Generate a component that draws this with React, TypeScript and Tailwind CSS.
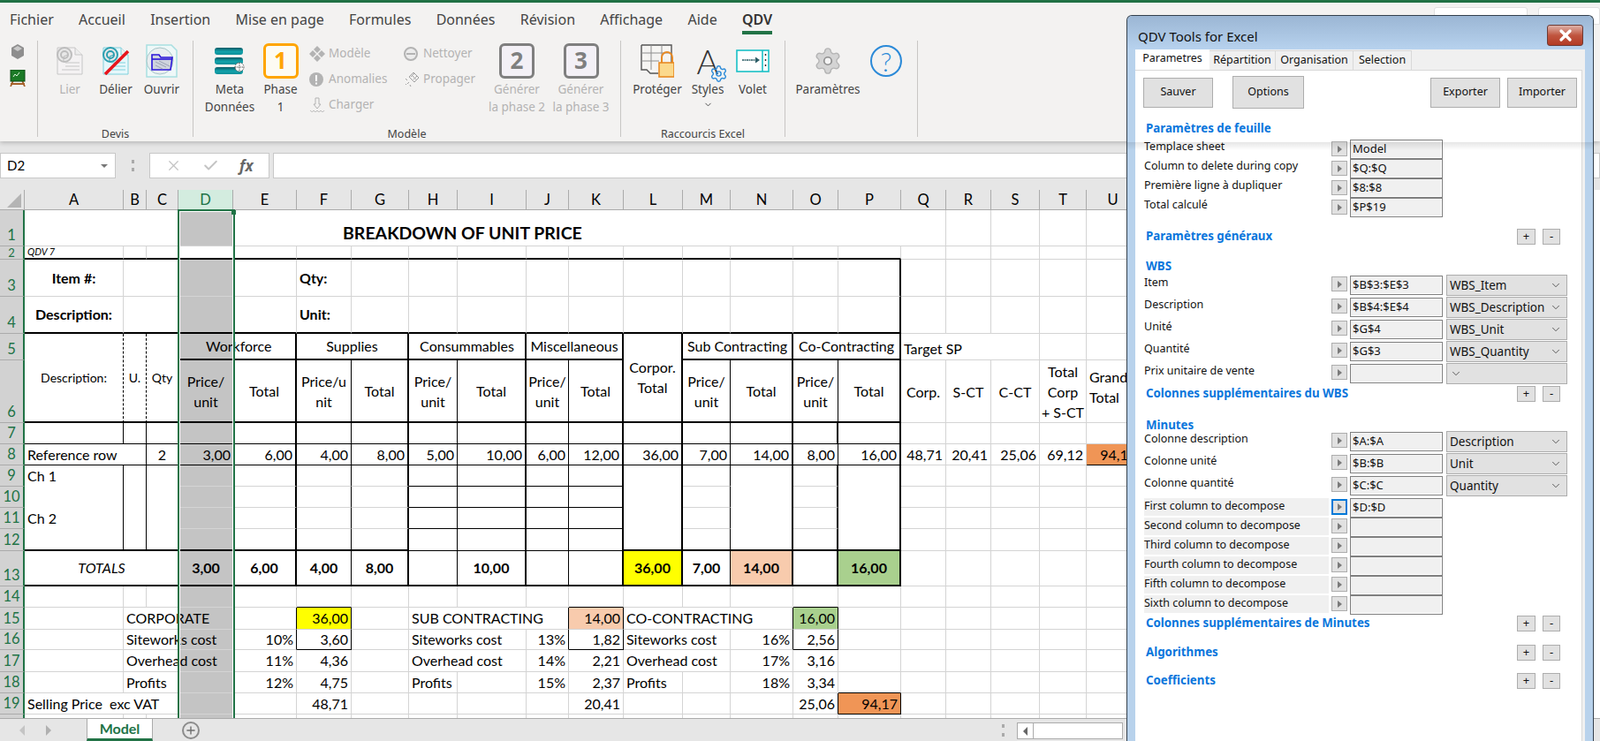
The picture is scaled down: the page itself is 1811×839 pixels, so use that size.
import { Check, ChevronDown, Plus, Settings, X } from "lucide-react";
import type { ReactNode } from "react";

// ---------- sheet data ----------

type Edge = "grid" | "none" | "thin" | "thick" | "dash";
type Cell = { t?: string; r?: Edge; b?: Edge; cls?: string; bg?: string; skip?: boolean };

const rightEdge: Record<Edge, string> = {
  grid: "border-r border-r-[#d4d4d4]",
  none: "",
  thin: "border-r border-r-black",
  thick: "border-r-2 border-r-black",
  dash: "border-r border-r-black [border-right-style:dashed]",
};
const bottomEdge: Record<Edge, string> = {
  grid: "border-b border-b-[#d4d4d4]",
  none: "",
  thin: "border-b border-b-black",
  thick: "border-b-2 border-b-black",
  dash: "",
};

const COLS = "ABCDEFGHIJKLMNOPQRSTU".split("");
const ROWS = Array.from({ length: 20 }, (_, i) => i + 1);
const sheet: Record<string, Cell> = {};

function put(cols: string, rows: number[], cell: Cell) {
  for (const c of cols) for (const r of rows) sheet[c + r] = { ...sheet[c + r], ...cell };
}

const NUM = "justify-end pr-[3px]";
const MID = "justify-center text-center";
const LEFT = "justify-start pl-[3px]";
const OVER = "relative z-10 whitespace-nowrap";
const TWO = "justify-center text-center whitespace-pre-line leading-[23px]";
const BOLD = "justify-center font-bold";
const R7_13 = [7, 8, 9, 10, 11, 12, 13];

put("D", ROWS.filter((r) => r !== 2), { bg: "bg-[#c4c4c4]" });
// top block
put("ABCDEFGHIJKLMNOP", [1], { r: "none" });
put("ABCDEFGHIJKLMNOP", [2, 4], { b: "thick" });
put("BCD", [3, 4], { r: "none" });
put("P", [3, 4], { r: "thick" });
sheet.F1 = { r: "none", t: "BREAKDOWN OF UNIT PRICE", cls: OVER + " justify-start items-end pl-[52px] font-bold text-[19.5px]" };
sheet.A2 = { b: "thick", t: "QDV 7", cls: "justify-start pl-[3px] italic text-[11px]" };
put("A", [3], { t: "Item #:", cls: MID + " font-bold" });
put("A", [4], { t: "Description:", cls: MID + " font-bold" });
put("F", [3], { t: "Qty:", cls: LEFT + " font-bold" });
put("F", [4], { t: "Unit:", cls: LEFT + " font-bold" });

// headers rows 5-6
sheet.A5 = { t: "Description:", r: "dash", b: "thick", cls: "row-span-2 text-[14px] " + MID };
sheet.B5 = { t: "U.", r: "dash", b: "thick", cls: "row-span-2 text-[14px] " + MID };
sheet.C5 = { t: "Qty", r: "thin", b: "thick", cls: "row-span-2 text-[14px] " + MID };
put("ABC", [6], { skip: true });
sheet.D5 = { bg: "bg-[#c4c4c4]", t: "Workforce", r: "none", b: "thick", cls: OVER + " justify-start pl-[31px]" };
put("E", [5], { r: "thick", b: "thick" });
const group = (a: string, b: string, t: string) => {
  sheet[a + 5] = { t, r: "thick", b: "thick", cls: "col-span-2 " + MID };
  sheet[b + 5] = { skip: true };
};
group("F", "G", "Supplies");
group("H", "I", "Consummables");
group("J", "K", "Miscellaneous");
group("M", "N", "Sub Contracting");
group("O", "P", "Co-Contracting");
sheet.L5 = { t: "Corpor.\nTotal", r: "thick", b: "thick", cls: "row-span-2 pb-[2px] " + TWO };
sheet.L6 = { skip: true };
put("DEFGHIJKMNOP", [6], { b: "thick", cls: TWO });
put("D", [6], { r: "none", t: "Price/\nunit" });
put("E", [6], { r: "thick", t: "Total" });
put("F", [6], { r: "thin", t: "Price/u\nnit" });
put("G", [6], { r: "thick", t: "Total" });
put("H", [6], { r: "thin", t: "Price/\nunit" });
put("I", [6], { r: "thick", t: "Total" });
put("J", [6], { r: "thin", t: "Price/\nunit" });
put("K", [6], { r: "thick", t: "Total" });
put("M", [6], { r: "thin", t: "Price/\nunit" });
put("N", [6], { r: "thick", t: "Total" });
put("O", [6], { r: "thin", t: "Price/\nunit" });
put("P", [6], { r: "thick", t: "Total" });
sheet.Q5 = { t: "Target SP", r: "none", cls: OVER + " justify-start items-end pl-[3px]" };
sheet.R5 = { r: "none" };
put("Q", [6], { t: "Corp.", cls: TWO });
put("R", [6], { t: "S-CT", cls: TWO });
put("S", [6], { t: "C-CT", cls: TWO });
put("T", [6], { t: "Total\nCorp\n+ S-CT", cls: TWO });
put("U", [6], { t: "Grand\nTotal", cls: "justify-start pl-[3px] whitespace-pre-line leading-[23px] pb-[10px]" });

// body verticals
put("ABC", [7, 8, 9, 10, 11, 12], { r: "thin" });
put("D", R7_13, { r: "none" });
put("EGIKLNOP", R7_13, { r: "thick" });
put("FHJM", R7_13, { r: "thin" });
put("O", [8], { r: "thin" });
put("ABCDEFGHIJKLMNOP", [7, 8], { b: "thin" });
put("ABC", [9, 10, 11], { b: "none" });
put("LNP", [9, 10, 11], { b: "none" });
put("HIJK", [9, 10, 11, 12], { b: "thin" });
put("ABCDEFGLMNOP", [12], { b: "thick" });

// row 8
sheet.A8 = { t: "Reference row", r: "thin", b: "thin", cls: "col-span-2 " + LEFT };
sheet.B8 = { skip: true };
put("C", [8], { t: "2", cls: MID });
const r8: [string, string][] = [
  ["D", "3,00"], ["E", "6,00"], ["F", "4,00"], ["G", "8,00"], ["H", "5,00"], ["I", "10,00"], ["J", "6,00"],
  ["K", "12,00"], ["L", "36,00"], ["M", "7,00"], ["N", "14,00"], ["O", "8,00"], ["P", "16,00"], ["Q", "48,71"],
  ["R", "20,41"], ["S", "25,06"], ["T", "69,12"],
];
r8.forEach(([c, t]) => put(c, [8], { t, cls: NUM }));
sheet.U8 = { t: "94,17", bg: "bg-[#f09556]", cls: NUM, r: "thin", b: "thin" };
put("A", [9], { t: "Ch 1", cls: LEFT });
put("A", [11], { t: "Ch 2", cls: LEFT });

// totals
sheet.A13 = { t: "TOTALS", r: "none", b: "thick", cls: "col-span-3 italic " + MID };
put("BC", [13], { skip: true });
put("DEFGHIJKLMNOP", [13], { b: "thick" });
const tot: [string, string][] = [
  ["D", "3,00"], ["E", "6,00"], ["F", "4,00"], ["G", "8,00"], ["I", "10,00"], ["L", "36,00"], ["M", "7,00"], ["N", "14,00"], ["P", "16,00"],
];
tot.forEach(([c, t]) => put(c, [13], { t, cls: BOLD }));
put("L", [13], { bg: "bg-[#ffff00]" });
put("N", [13], { bg: "bg-[#f8cbad]" });
put("P", [13], { bg: "bg-[#a9d08e]" });

// recap
put("BC", [15, 16, 17, 18], { r: "none" });
put("H", [15, 16, 17], { r: "none" });
put("I", [15], { r: "none" });
put("L", [15, 16, 17], { r: "none" });
put("M", [15], { r: "none" });
put("AB", [19], { r: "none" });
const label = (cell: string, row: number, t: string) => put(cell, [row], { t, cls: OVER + " " + LEFT });
const right = (cell: string, row: number, t: string) => put(cell, [row], { t, cls: NUM });
label("B", 15, "CORPORATE");
label("B", 16, "Siteworks cost");
label("B", 17, "Overhead cost");
label("B", 18, "Profits");
label("A", 19, "Selling Price\u00a0 exc VAT");
label("H", 15, "SUB CONTRACTING");
label("H", 16, "Siteworks cost");
label("H", 17, "Overhead cost");
label("H", 18, "Profits");
label("L", 15, "CO-CONTRACTING");
label("L", 16, "Siteworks cost");
label("L", 17, "Overhead cost");
label("L", 18, "Profits");
([
  ["E", 16, "10%"], ["E", 17, "11%"], ["E", 18, "12%"], ["F", 15, "36,00"], ["F", 16, "3,60"], ["F", 17, "4,36"], ["F", 18, "4,75"], ["F", 19, "48,71"],
  ["J", 16, "13%"], ["J", 17, "14%"], ["J", 18, "15%"], ["K", 15, "14,00"], ["K", 16, "1,82"], ["K", 17, "2,21"], ["K", 18, "2,37"], ["K", 19, "20,41"],
  ["N", 16, "16%"], ["N", 17, "17%"], ["N", 18, "18%"], ["O", 15, "16,00"], ["O", 16, "2,56"], ["O", 17, "3,16"], ["O", 18, "3,34"], ["O", 19, "25,06"],
  ["P", 19, "94,17"],
] as [string, number, string][]).forEach(([c, r, t]) => right(c, r, t));
put("F", [15], { bg: "bg-[#ffff00]" });
put("K", [15], { bg: "bg-[#f8cbad]" });
put("O", [15], { bg: "bg-[#a9d08e]" });
put("P", [19], { bg: "bg-[#f09556]", r: "thin", b: "thin" });
put("O", [19], { r: "thin" });
put("P", [18], { b: "thin" });
// boxes around the recap totals
put("FKO", [14], { b: "thin" });
put("FKO", [15], { r: "thin" });
put("FKO", [16], { r: "thin", b: "thin" });
put("EJN", [15, 16], { r: "thin" });

function Sheet() {
  return (
    <div className="relative h-[598px] overflow-hidden bg-white font-[Lato,sans-serif] text-[16px] text-black">
      <div className="grid w-[1290px] grid-cols-[28px_112px_26px_36px_62px_72px_62px_65px_55px_78px_48px_62px_67px_54px_71px_51px_71px_51px_51px_55px_53px_60px] grid-rows-[23px_41px_15px_42px_42px_30px_71px_24px_24px_24px_24px_24px_25px_40px_24px_25px_23px_25px_24px_24px_24px]">
        <div className="relative border-r border-b border-[#ababab] bg-[#e6e6e6]">
          <div className="absolute right-[3px] bottom-[2px] h-0 w-0 border-b-[16px] border-l-[16px] border-b-[#b4b4b4] border-l-transparent" />
        </div>
        {COLS.map((c) => (
          <div
            key={c}
            className={
              c === "D"
                ? "flex items-center justify-center border-r border-b border-[#ababab] bg-[#d3ecdf] text-[16.5px] text-[#217346]"
                : "flex items-center justify-center border-r border-b border-[#ababab] bg-[#e6e6e6] text-[16.5px]"
            }
          >
            {c}
          </div>
        ))}
        {ROWS.map((r) => [
          <div
            key={"h" + r}
            className={
              r === 2
                ? "flex items-end justify-center overflow-hidden border-r-2 border-b border-r-[#217346] border-b-[#ababab] bg-[#d2d2d2] text-[13px] leading-[14px] text-[#217346]"
                : "flex items-end justify-center overflow-hidden border-r-2 border-b border-r-[#217346] border-b-[#ababab] bg-[#d2d2d2] pb-[2px] text-[16.5px] leading-[20px] text-[#217346]"
            }
          >
            {r < 20 ? r : null}
          </div>,
          ...COLS.map((c) => {
            const cell = sheet[c + r] ?? {};
            if (cell.skip) return null;
            return (
              <div
                key={c + r}
                className={`flex items-center ${rightEdge[cell.r ?? "grid"]} ${bottomEdge[cell.b ?? "grid"]} ${cell.bg ?? ""} ${cell.cls ?? ""}`}
              >
                {cell.t}
              </div>
            );
          }),
        ])}
      </div>
      {/* selected column D */}
      <div className="pointer-events-none absolute top-[22px] bottom-0 left-[201px] z-20 w-[65px] border-x-2 border-t-2 border-[#217346]">
        <div className="h-full border-x border-t border-white" />
      </div>
      <div className="absolute top-[23px] left-[262px] z-20 h-[5px] w-[5px] bg-[#217346]" />
    </div>
  );
}

// ---------- ribbon icons ----------

function PageIcon({ tint = "#f4f2f3", line = "#c6c6c6", round = "#bdbdbd", cut = false }) {
  return (
    <svg width="34" height="32" viewBox="0 0 34 32">
      <path d="M3 1h20l8 8v22H3z" fill={tint} stroke={line} />
      <path d="M23 1v8h8" fill="#ededed" stroke={line} />
      <path d="M12 18h16M12 22h16M8 26h20" stroke={line} />
      <circle cx="11" cy="9" r="8" fill="#e8e8e8" stroke={round} strokeWidth="2" />
      <circle cx="11" cy="9" r="4" fill="none" stroke={round} strokeWidth="2" />
      <path d="M10 17v-6l5-2" fill="none" stroke={round} />
      {cut && <path d="M5 31 31 5" stroke="#e8141c" strokeWidth="3.5" />}
    </svg>
  );
}

function OpenIcon() {
  return (
    <svg width="38" height="38" viewBox="0 0 38 38">
      <path d="M2 1h28l6 6v30H2z" fill="#eef8f8" stroke="#a9dfe1" strokeWidth="1.5" />
      <circle cx="17" cy="19" r="15" fill="#e9eef0" stroke="#a6c6c8" />
      <path d="M8 12h8l2 3h13l-2 14H8z" fill="#cfd4de" stroke="#2a15d9" strokeWidth="1.6" />
      <path d="M8 17h22" stroke="#2a15d9" strokeWidth="1.6" />
      <path d="M12 20l12 6M12 24l8 4M16 19l12 6" stroke="#9aa0b4" />
    </svg>
  );
}

function DataIcon() {
  return (
    <svg width="36" height="32" viewBox="0 0 36 32">
      <defs>
        <linearGradient id="bar" x1="0" x2="0" y1="0" y2="1">
          <stop offset="0" stopColor="#0c5a66" />
          <stop offset="0.55" stopColor="#12a2aa" />
          <stop offset="1" stopColor="#0f8f99" />
        </linearGradient>
      </defs>
      <rect x="1" y="1" width="32" height="8" rx="3" fill="url(#bar)" />
      <rect x="1" y="12" width="32" height="8" rx="3" fill="url(#bar)" />
      <rect x="1" y="23" width="32" height="8" rx="3" fill="url(#bar)" />
      <circle cx="29" cy="23" r="5" fill="#fff" stroke="#555" strokeDasharray="1.5 1" />
      <path d="M24 23h10M29 18v10" stroke="#555" strokeDasharray="1.5 1" />
    </svg>
  );
}

function PhaseBadge({ n, on = false }: { n: string; on?: boolean }) {
  return (
    <div
      className={
        on
          ? "flex h-[40px] w-[40px] items-center justify-center rounded-[6px] border-[3px] border-[#ffa500] bg-[#fdfbf3] font-['Liberation_Sans',sans-serif] text-[26px] font-bold text-[#ffa500]"
          : "flex h-[40px] w-[40px] items-center justify-center rounded-[6px] border-[3px] border-[#7f7f7f] bg-[#f3f0f6] font-['Liberation_Sans',sans-serif] text-[26px] font-bold text-[#7f7f7f]"
      }
    >
      {n}
    </div>
  );
}

function ProtectIcon() {
  return (
    <svg width="38" height="38" viewBox="0 0 38 38">
      <path d="M1 1h34v20M1 1v28h6l4 4h9" fill="#f6f5f3" stroke="#555" strokeWidth="1.4" />
      <path d="M1 10h34M1 19h20M12 1v28M24 1v14" stroke="#8e8e8e" />
      <path d="M24 21v-6a6 6 0 0 1 12 0v6" fill="none" stroke="#e88a24" strokeWidth="2" />
      <rect x="21" y="21" width="17" height="16" fill="#fbd98c" stroke="#e88a24" strokeWidth="1.6" />
    </svg>
  );
}

function PanelIcon() {
  return (
    <svg width="38" height="28" viewBox="0 0 38 28">
      <rect x="1" y="2" width="36" height="24" fill="#fff" stroke="#18c0c6" strokeWidth="1.6" />
      <path d="M30 2v24" stroke="#18c0c6" strokeWidth="1.6" />
      <path d="M7 13h17" stroke="#2c5d66" strokeWidth="1.5" strokeDasharray="2 0.5" />
      <path d="M22 9.5l5 3.5-5 3.5z" fill="#2c5d66" />
      <path d="M33.5 6v2M33.5 12v2M33.5 18v2" stroke="#333" strokeWidth="1.5" />
    </svg>
  );
}

function GearIcon() {
  return (
    <svg width="34" height="34" viewBox="0 0 24 24">
      <path
        d="M9.671 4.136a2.34 2.34 0 0 1 4.659 0 2.34 2.34 0 0 0 3.319 1.915 2.34 2.34 0 0 1 2.33 4.033 2.34 2.34 0 0 0 0 3.831 2.34 2.34 0 0 1-2.33 4.033 2.34 2.34 0 0 0-3.319 1.915 2.34 2.34 0 0 1-4.659 0 2.34 2.34 0 0 0-3.32-1.915 2.34 2.34 0 0 1-2.33-4.033 2.34 2.34 0 0 0 0-3.831A2.34 2.34 0 0 1 6.35 6.051a2.34 2.34 0 0 0 3.319-1.915"
        fill="#d4d4d4"
        stroke="#b5b5b5"
      />
      <circle cx="12" cy="12" r="3" fill="#f5f5f5" stroke="#8f8f8f" strokeWidth="1.2" />
    </svg>
  );
}

function SmallIcon({ kind }: { kind: string }) {
  const c = "#b3b3b3";
  if (kind === "model")
    return (
      <svg width="18" height="18" viewBox="0 0 18 18">
        <path d="M9 0l4 4-4 4-4-4zM4 5l4 4-4 4-4-4zM14 5l4 4-4 4-4-4zM9 10l4 4-4 4-4-4z" fill={c} />
      </svg>
    );
  if (kind === "warn")
    return (
      <svg width="16" height="16" viewBox="0 0 16 16">
        <circle cx="8" cy="8" r="8" fill={c} />
        <path d="M7 3h2v7H7zM7 11.5h2v2H7z" fill="#fff" />
      </svg>
    );
  if (kind === "load")
    return (
      <svg width="18" height="18" viewBox="0 0 18 18" fill="none" stroke={c}>
        <path d="M7 1h4v7h2l-4 5-4-5h2zM1 15c2 2 3 2 4 0 1 2 3 2 4 0 1 2 3 2 4 0 1 2 3 2 4 0" />
      </svg>
    );
  if (kind === "clean")
    return (
      <svg width="16" height="16" viewBox="0 0 16 16">
        <circle cx="8" cy="8" r="7" fill="#ececec" stroke={c} strokeWidth="2" />
        <path d="M3 8h10" stroke={c} strokeWidth="2" />
      </svg>
    );
  return (
    <svg width="18" height="18" viewBox="0 0 18 18" fill="none" stroke="#a0a0a0">
      <path d="M11 1l6 6-5 5-6-6zM9 4l5 5M12 2l-4 4M15 5l-4 4" />
      <path d="M2 8l2 2M6 12l-2 2M2 14l1 1M7 15l1 2" />
    </svg>
  );
}

// ---------- ribbon ----------

function BigButton({ w, icon, label, off = false, extra }: { w: string; icon: ReactNode; label: string; off?: boolean; extra?: ReactNode }) {
  return (
    <div className={`flex shrink-0 flex-col items-center ${w}`}>
      <div className="relative flex h-[45px] items-center justify-center">{icon}</div>
      <div className={off ? "whitespace-pre text-center leading-[20px] text-[#b3b3b3]" : "whitespace-pre text-center leading-[20px] text-[#444]"}>{label}</div>
      {extra}
    </div>
  );
}

function SmallButton({ kind, label }: { kind: string; label: string }) {
  return (
    <div className="flex h-[29px] items-center text-[#b3b3b3]">
      <span className="flex w-[22px] justify-start">
        <SmallIcon kind={kind} />
      </span>
      {label}
    </div>
  );
}

function RibbonGroup({ w, label, children }: { w: string; label?: string; children: ReactNode }) {
  return (
    <div className={`flex h-[114px] shrink-0 flex-col ${w}`}>
      <div className="flex flex-1 items-start">{children}</div>
      <div className="text-center text-[12.5px] leading-[16px] text-[#444]">{label}</div>
    </div>
  );
}

const Divider = () => <div className="h-[109px] w-px shrink-0 bg-[#c8c6c4]" />;

const TABS = ["Fichier", "Accueil", "Insertion", "Mise en page", "Formules", "Données", "Révision", "Affichage", "Aide"];

function Ribbon() {
  return (
    <div className="relative z-10 h-[157px] bg-[#f3f2f1] font-['Open_Sans',sans-serif] text-[13.5px] shadow-[0_2px_5px_rgba(0,0,0,0.2)]">
      <div className="flex h-[36px] gap-[28.3px] pl-[11px] text-[16px] text-[#444]">
        {TABS.map((t) => (
          <div key={t} className="flex items-center border-b-4 border-transparent pt-[6px]">
            {t}
          </div>
        ))}
        <div className="flex items-center border-b-4 border-[#217346] pt-[6px] font-semibold text-[#333]">QDV</div>
        <div className="ml-auto flex items-start gap-[12px] pt-[5px]">
          <div className="h-[20px] w-[106px] rounded-t-[3px] border border-[#e0e0e0] bg-white" />
          <div className="h-[20px] w-[70px] rounded-t-[3px] border border-[#e0e0e0] bg-white" />
        </div>
      </div>
      <div className="mt-[7px] flex">
        <RibbonGroup w="w-[42px]">
          <div className="flex flex-col items-center gap-[12px] pt-[4px] pl-[11px]">
            <svg width="16" height="17" viewBox="0 0 16 17">
              <path d="M8 0l7 4v9l-7 4-7-4V4z" fill="#8e8e8e" />
              <path d="M8 2l5 3-5 3-5-3z" fill="#c9c9c9" />
            </svg>
            <svg width="18" height="19" viewBox="0 0 18 19">
              <path d="M4 12l-3 7M14 12l3 7M1 16h16" stroke="#a5602a" strokeWidth="1.8" />
              <rect x="1" y="0" width="16" height="13" fill="#1b7a26" stroke="#0d4a14" />
              <path d="M4 8l2-3 2 2 3-4" stroke="#dff5df" fill="none" />
            </svg>
          </div>
        </RibbonGroup>
        <Divider />
        <RibbonGroup w="w-[175px]" label="Devis">
          <div className="flex pl-[10px]">
            <BigButton w="w-[52px]" off label="Lier" icon={<PageIcon />} />
            <BigButton w="w-[52px]" label="Délier" icon={<PageIcon tint="#e6f7fb" line="#7fd0dc" round="#2c9fb0" cut />} />
            <BigButton w="w-[52px]" label="Ouvrir" icon={<OpenIcon />} />
          </div>
        </RibbonGroup>
        <Divider />
        <RibbonGroup w="w-[483px]" label="Modèle">
          <div className="flex pl-[6px]">
            <BigButton w="w-[70px]" label={"Meta\nDonnées"} icon={<DataIcon />} />
            <BigButton w="w-[45px]" label={"Phase\n1"} icon={<PhaseBadge n="1" on />} />
            <div className="ml-[10px] flex w-[105px] shrink-0 flex-col">
              <SmallButton kind="model" label="Modèle" />
              <SmallButton kind="warn" label="Anomalies" />
              <SmallButton kind="load" label="Charger" />
            </div>
            <div className="flex w-[95px] shrink-0 flex-col pl-[2px]">
              <SmallButton kind="clean" label="Nettoyer" />
              <SmallButton kind="spread" label="Propager" />
            </div>
            <BigButton w="w-[70px]" off label={"Générer\nla phase 2"} icon={<PhaseBadge n="2" />} />
            <BigButton w="w-[75px]" off label={"Générer\nla phase 3"} icon={<PhaseBadge n="3" />} />
          </div>
        </RibbonGroup>
        <Divider />
        <RibbonGroup w="w-[185px]" label="Raccourcis Excel">
          <div className="flex pl-[5px]">
            <BigButton w="w-[72px]" label="Protéger" icon={<ProtectIcon />} />
            <BigButton
              w="w-[42px]"
              label="Styles"
              icon={
                <>
                  <span className="font-[Lato,sans-serif] text-[38px] leading-none font-light text-[#333]">A</span>
                  <Settings size={21} strokeWidth={1.6} className="absolute -right-[11px] bottom-[-3px] text-[#2b8ad8]" />
                </>
              }
              extra={<ChevronDown size={11} className="mt-[2px] text-[#444]" />}
            />
            <BigButton w="w-[60px]" label="Volet" icon={<PanelIcon />} />
          </div>
        </RibbonGroup>
        <Divider />
        <RibbonGroup w="w-[149px]">
          <div className="flex pl-[6px]">
            <BigButton w="w-[84px]" label="Paramètres" icon={<GearIcon />} />
            <div className="flex h-[45px] w-[48px] items-center justify-center">
              <div className="flex h-[36px] w-[36px] items-center justify-center rounded-full border-2 border-[#2b8ad8] font-[Lato,sans-serif] text-[30px] leading-none font-light text-[#2b8ad8]">?</div>
            </div>
          </div>
        </RibbonGroup>
        <Divider />
      </div>
    </div>
  );
}

function FormulaBar() {
  return (
    <div className="flex h-[55px] items-start bg-[#e6e6e6] pt-[13px] font-['Open_Sans',sans-serif]">
      <div className="flex h-[29px] w-[131px] items-center justify-between border border-[#c8c8c8] bg-white pr-[8px] pl-[7px] font-[Lato,sans-serif] text-[15px]">
        D2
        <div className="h-0 w-0 border-x-[4px] border-t-[4px] border-x-transparent border-t-[#777]" />
      </div>
      <div className="flex h-[29px] w-[38px] items-center justify-center">
        <div className="h-[13px] w-[3px] border-y-[4px] border-[#aaa] bg-[#e6e6e6]" />
      </div>
      <div className="flex h-[29px] w-[136px] items-center justify-around border border-[#c8c8c8] bg-white px-[6px]">
        <X size={19} strokeWidth={1.6} className="text-[#c4c4c4]" />
        <Check size={19} strokeWidth={2.4} className="text-[#c4c4c4]" />
        <span className="font-['Liberation_Serif',serif] text-[17px] font-bold text-[#666] italic">fx</span>
      </div>
      <div className="ml-[4px] h-[29px] flex-1 border border-[#c8c8c8] bg-white" />
    </div>
  );
}

function BottomBar() {
  return (
    <div className="flex h-[26px] items-stretch border-t border-[#ababab] bg-[#e6e6e6]">
      <div className="flex w-[98px] items-center gap-[24px] pl-[22px]">
        <div className="h-0 w-0 border-y-[6px] border-r-[6px] border-y-transparent border-r-[#c4c4c4]" />
        <div className="h-0 w-0 border-y-[6px] border-l-[6px] border-y-transparent border-l-[#b0b0b0]" />
      </div>
      <div className="flex w-[75px] items-center justify-center border-x border-b-[3px] border-x-[#ababab] border-b-[#217346] bg-white font-[Lato,sans-serif] text-[16px] font-bold text-[#217346]">
        Model
      </div>
      <div className="ml-[33px] flex w-[20px] items-center">
        <div className="flex h-[20px] w-[20px] items-center justify-center rounded-full border-2 border-[#8c8c8c]">
          <Plus size={14} strokeWidth={2.4} className="text-[#6f6f6f]" />
        </div>
      </div>
      <div className="ml-[908px] flex w-[8px] items-center">
        <div className="h-[14px] w-[3px] border-y-[4px] border-[#aaa] bg-[#e6e6e6]" />
      </div>
      <div className="mt-[4px] ml-[9px] flex h-[19px] w-[120px] border border-[#ababab] bg-white">
        <div className="flex w-[18px] items-center justify-center border-r border-[#ababab]">
          <div className="h-0 w-0 border-y-[5px] border-r-[5px] border-y-transparent border-r-[#666]" />
        </div>
      </div>
    </div>
  );
}

// ---------- QDV panel ----------

function ArrowBtn({ focus = false, tight = false }) {
  const base = tight ? "mt-px ml-[3px] " : "mt-[2px] ml-[3px] ";
  return (
    <div
      className={
        base +
        (focus
          ? "flex h-[18px] w-[18px] shrink-0 items-center justify-center border-2 border-[#0078d7] bg-[#e1e1e1]"
          : "flex h-[17px] w-[18px] shrink-0 items-center justify-center border border-[#adadad] bg-[#e1e1e1]")
      }
    >
      <div className="h-0 w-0 border-y-[4px] border-l-[5px] border-y-transparent border-l-[#7a7a7a]" />
    </div>
  );
}

function Field({ value = "", h }: { value?: string; h: string }) {
  return (
    <div className={`ml-[3px] flex w-[105px] shrink-0 items-center border border-[#7f7f7f] bg-[#f0f0f0] pl-[2px] text-[13px] shadow-[inset_-1px_-1px_0_#fff] ${h}`}>{value}</div>
  );
}

function Combo({ value = "" }: { value?: string }) {
  return (
    <div className="-mt-px ml-[4px] flex h-[24px] w-[137px] shrink-0 items-center justify-between border border-[#adadad] bg-[#e1e1e1] pr-[5px] pl-[3px] text-[13.5px]">
      {value}
      <ChevronDown size={14} strokeWidth={1.3} className="text-[#333]" />
    </div>
  );
}

function ParamRow({ label, value }: { label: string; value: string }) {
  return (
    <div className="flex h-[22px] items-start">
      <div className="w-[209px] shrink-0 leading-[16px]">{label}</div>
      <ArrowBtn />
      <Field value={value} h="h-[22px]" />
    </div>
  );
}

function ComboRow({ label, value, combo }: { label: string; value?: string; combo?: string }) {
  return (
    <div className="flex h-[25px] items-start">
      <div className="w-[209px] shrink-0 leading-[15px]">{label}</div>
      <ArrowBtn tight />
      <Field value={value} h="h-[22px]" />
      <Combo value={combo} />
    </div>
  );
}

function DecomposeRow({ label, value, focus = false }: { label: string; value?: string; focus?: boolean }) {
  return (
    <div className="flex h-[22px] items-start">
      <div className="h-[20px] w-[209px] shrink-0 bg-[#f0f0f0] pt-px leading-[15px]">{label}</div>
      <ArrowBtn focus={focus} tight />
      <Field value={value} h="h-[22px]" />
    </div>
  );
}

function SectionHead({ title, cls = "" }: { title: string; cls?: string }) {
  return <div className={`pl-[2px] text-[13.3px] leading-[18px] font-bold text-[#0a76dc] ${cls}`}>{title}</div>;
}

function SectionRow({ title, cls }: { title: string; cls: string }) {
  return (
    <div className={`flex h-[18px] items-center justify-between pr-[24px] ${cls}`}>
      <SectionHead title={title} cls="-mt-[3px]" />
      <div className="flex gap-[8px]">
        <div className="flex h-[18px] w-[21px] items-center justify-center border border-[#adadad] bg-[#e1e1e1] text-[13px]">+</div>
        <div className="flex h-[18px] w-[20px] items-center justify-center border border-[#adadad] bg-[#e1e1e1] text-[13px]">-</div>
      </div>
    </div>
  );
}

function ActionBtn({ label, cls }: { label: string; cls: string }) {
  return <div className={`flex items-center justify-center border border-[#adadad] bg-[#e1e1e1] ${cls}`}>{label}</div>;
}

function QdvPanel() {
  return (
    <div className="absolute top-[17px] bottom-0 left-[1275px] z-30 flex w-[529px] flex-col rounded-t-[6px] border-x border-t border-[#33404d] bg-[#b8d2ec] font-['Liberation_Sans',sans-serif] text-[12.5px] text-[#111]">
      <div className="flex h-[38px] shrink-0 items-start justify-between rounded-t-[6px] bg-gradient-to-b from-[#9bb6d4] to-[#b7d2ee] pr-[11px] pl-[12px]">
        <div className="pt-[13px] text-[15px] leading-[20px]">QDV Tools for Excel</div>
        <div className="mt-[10px] flex h-[24px] w-[41px] items-center justify-center rounded-[3px] border border-[#6d3a34] bg-gradient-to-b from-[#dcb0a8] via-[#c0553f] to-[#b33b24]">
          <X size={20} strokeWidth={4} className="text-white" />
        </div>
      </div>
      <div className="mx-[9px] flex flex-1 flex-col bg-[#f0f0f0]">
        <div className="flex h-[23px] shrink-0 items-end">
          <div className="flex h-[23px] w-[84px] items-center justify-center bg-white pb-[3px]">Parametres</div>
          <div className="flex h-[22px] w-[75px] items-center justify-center border-t border-r border-[#d9d9d9]">Répartition</div>
          <div className="flex h-[22px] w-[88px] items-center justify-center border-t border-r border-[#d9d9d9]">Organisation</div>
          <div className="flex h-[22px] w-[66px] items-center justify-center border-t border-r border-[#d9d9d9]">Selection</div>
        </div>
        <div className="mr-[3px] flex-1 border-t border-r border-[#d9d9d9] bg-white pl-[10px]">
          <div className="flex h-[43px] items-center gap-[22px] pt-[6px] pr-[5px]">
            <ActionBtn label="Sauver" cls="h-[34px] w-[79px] -ml-px" />
            <ActionBtn label="Options" cls="h-[37px] w-[81px]" />
            <div className="ml-auto flex gap-[8px]">
              <ActionBtn label="Exporter" cls="h-[34px] w-[79px]" />
              <ActionBtn label="Importer" cls="h-[34px] w-[79px]" />
            </div>
          </div>
          <SectionHead title="Paramètres de feuille" cls="mt-[13px]" />
          <div className="mt-[4px]">
            <ParamRow label="Templace sheet" value="Model" />
            <ParamRow label="Column to delete during copy" value="$Q:$Q" />
            <ParamRow label="Première ligne à dupliquer" value="$8:$8" />
            <ParamRow label="Total calculé" value="$P$19" />
          </div>
          <SectionRow title="Paramètres généraux" cls="mt-[13px]" />
          <SectionHead title="WBS" cls="mt-[15px]" />
          <div className="mt-[2px]">
            <ComboRow label="Item" value="$B$3:$E$3" combo="WBS_Item" />
            <ComboRow label="Description" value="$B$4:$E$4" combo="WBS_Description" />
            <ComboRow label="Unité" value="$G$4" combo="WBS_Unit" />
            <ComboRow label="Quantité" value="$G$3" combo="WBS_Quantity" />
            <ComboRow label="Prix unitaire de vente" />
          </div>
          <SectionRow title="Colonnes supplémentaires du WBS" cls="" />
          <SectionHead title="Minutes" cls="mt-[17px] -mb-px" />
          <ComboRow label="Colonne description" value="$A:$A" combo="Description" />
          <ComboRow label="Colonne unité" value="$B:$B" combo="Unit" />
          <ComboRow label="Colonne quantité" value="$C:$C" combo="Quantity" />
          <DecomposeRow label="First column to decompose" value="$D:$D" focus />
          <DecomposeRow label="Second column to decompose" />
          <DecomposeRow label="Third column to decompose" />
          <DecomposeRow label="Fourth column to decompose" />
          <DecomposeRow label="Fifth column to decompose" />
          <DecomposeRow label="Sixth column to decompose" />
          <SectionRow title="Colonnes supplémentaires de Minutes" cls="mt-px" />
          <SectionRow title="Algorithmes" cls="mt-[15px]" />
          <SectionRow title="Coefficients" cls="mt-[14px]" />
        </div>
      </div>
      {/* ribbon shadow seen through the glass */}
      <div className="pointer-events-none absolute inset-x-0 top-[143px] h-[9px] bg-gradient-to-b from-black/10 to-transparent" />
    </div>
  );
}

export default function App() {
  return (
    <div className="relative h-[839px] w-[1811px] overflow-hidden bg-[#e6e6e6]">
      <div className="h-[3px] bg-[#217346]" />
      <Ribbon />
      <FormulaBar />
      <Sheet />
      <BottomBar />
      <QdvPanel />
    </div>
  );
}
